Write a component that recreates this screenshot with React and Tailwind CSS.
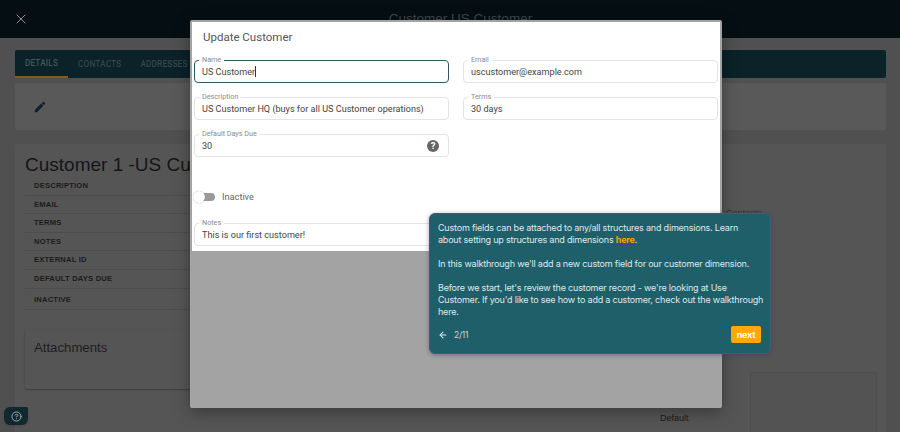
import React from "react";
import { X, ArrowLeft, CircleHelp } from "lucide-react";

const rows = ["DESCRIPTION", "EMAIL", "TERMS", "NOTES", "EXTERNAL ID", "DEFAULT DAYS DUE"];

const Field = ({ label, value, focused, icon }) => (
  <div className={"relative h-[23px] rounded-[4px] border bg-white flex items-center pl-[7px] pr-[8px] " + (focused ? "border-[#35575f] border-[1.5px]" : "border-[#e3e3e3]")}>
    <span className="absolute left-[4px] top-[-6px] bg-white px-[3px] text-[7.2px] leading-[9px] text-[#8a8a8a]">{label}</span>
    <span className="text-[9.1px] leading-[14px] text-[#444] whitespace-nowrap">{value}</span>
    {focused && <span className="w-px h-[11px] bg-[#333]"></span>}
    {icon && (
      <span className="ml-auto mr-[1px] w-[12px] h-[12px] rounded-full bg-[#666] text-white text-[9.5px] leading-[12px] font-bold text-center">?</span>
    )}
  </div>
);

export default function App() {
  return (
    <div className="relative w-[900px] h-[432px] overflow-hidden bg-[#505050] font-['Liberation_Sans',sans-serif]">
      <div className="h-[38px] bg-[#050f13] flex items-center justify-center relative">
        <X className="absolute left-[13px] top-[11px] text-[#8b9496]" size={16} strokeWidth={1.5} />
        <span className="text-[13.5px] text-[#3e474a] ml-[21px]">Customer US Customer</span>
      </div>

      <div className="pl-[15px] pr-[14px] pt-[12px]">
        <div className="h-[28px] rounded-[2px] bg-[#0a2228] flex font-['Roboto',sans-serif] font-medium text-[8.2px] tracking-[0.2px]">
          <div className="w-[53px] flex items-center justify-center text-[#41585c] border-b-2 border-[#8a5d0c]">DETAILS</div>
          <div className="ml-[10px] flex items-center text-[#33474c]">CONTACTS</div>
          <div className="ml-[19px] flex items-center text-[#33474c]">ADDRESSES</div>
        </div>

        <div className="mt-[5px] h-[47px] rounded-[2px] bg-[#595959] flex items-center pl-[18px]">
          <svg width="14" height="14" viewBox="0 0 24 24" fill="#0d2229">
            <path d="M3 17.25V21h3.75L17.81 9.94l-3.75-3.75L3 17.25zM20.71 7.04c.39-.39.39-1.02 0-1.41l-2.34-2.34c-.39-.39-1.02-.39-1.41 0l-1.83 1.83 3.75 3.75 1.83-1.83z" />
          </svg>
        </div>

        <div className="mt-[14px] rounded-[2px] bg-[#555555] h-[300px] pl-[10px] pt-[9px] flex">
          <div className="w-[250px]">
            <div className="text-[19px] leading-[24px] text-[#151515] whitespace-nowrap">Customer 1 -US Customer</div>
            <div>
              {rows.map((r) => (
                <div key={r} className="h-[18.6px] border-b border-[#4c4c4c] pl-[9px] flex items-center text-[7.6px] font-bold tracking-[0.2px] text-[#1c1c1c]">{r}</div>
              ))}
              <div className="h-[21px] pt-[3px] border-b border-[#4c4c4c] pl-[9px] flex items-center text-[7.6px] font-bold tracking-[0.2px] text-[#1c1c1c]">INACTIVE</div>
            </div>
            <div className="mt-[19px] h-[60px] w-[400px] rounded-[2px] bg-[#555555] shadow-[0_1px_2px_rgba(0,0,0,0.3)] pl-[9px] pt-[9px] text-[13.2px] text-[#1e1e1e]">Attachments</div>
          </div>
          <div className="ml-[475px] mt-[219px] w-[127px] h-[80px] border border-[#4e4e4e] bg-[#535353]"></div>
        </div>
      </div>
      <div className="absolute left-[726px] top-[207px] text-[9px] text-[#333]">Contacts</div>
      <div className="absolute left-[660px] top-[412px] text-[9px] text-[#1c1c1c]">Default</div>

      <button className="absolute left-[4px] top-[407px] w-[24px] h-[18px] rounded-[6px] rounded-tr-[2px] bg-[#10292e] flex items-center justify-center shadow">
        <CircleHelp className="text-[#a9b4b6]" size={11} />
      </button>

      {/* modal */}
      <div className="absolute left-[190px] top-[20px] w-[532px] h-[388px] bg-[#a3a3a3] rounded-[2px] shadow-[0_4px_16px_rgba(0,0,0,0.35)] p-[2px] pb-0 font-['Roboto',sans-serif]">
        <div className="h-[229px] bg-white">
          <div className="pl-[11px] pt-[7px] text-[11.5px] leading-[16px] text-[#555]">Update Customer</div>
          <div className="mt-[15px] pl-[2px] pr-[2px] grid grid-cols-2 gap-x-[14px] gap-y-[14px]">
            <Field label="Name" value="US Customer" focused />
            <Field label="Email" value="uscustomer@example.com" />
            <Field label="Description" value="US Customer HQ (buys for all US Customer operations)" />
            <Field label="Terms" value="30 days" />
            <Field label="Default Days Due" value="30" icon />
          </div>
          <div className="mt-[34px] pl-[1px] flex items-center h-[12px]">
            <div className="relative w-[20px] h-[8px] ml-[2px] rounded-full bg-[#9a9a9a]">
              <div className="absolute left-[-2px] top-[-2px] w-[12px] h-[12px] rounded-full bg-white shadow-[0_0_1px_rgba(0,0,0,0.4)]"></div>
            </div>
            <span className="ml-[7px] text-[9.2px] text-[#666]">Inactive</span>
          </div>
          <div className="mt-[20px] px-[2px]">
            <Field label="Notes" value="This is our first customer!" />
          </div>
        </div>
      </div>

      {/* walkthrough tooltip */}
      <div className="absolute left-[429px] top-[213px] w-[342px] h-[141px] rounded-[6px] bg-[#1f5f69] border border-[#4a5a6e] shadow-[0_1px_4px_rgba(60,50,110,0.5)] pl-[8px] pr-[9px] pt-[8px] font-['Inter',sans-serif] text-[9px] leading-[12px] tracking-[-0.2px] text-[#dfe9ea] whitespace-nowrap">
        <p>Custom fields can be attached to any/all structures and dimensions. Learn<br />about setting up structures and dimensions <a className="text-[#f5a800] font-bold underline decoration-[#4a3c9a]">here</a>.</p>
        <p className="mt-[12px]">In this walkthrough we'll add a new custom field for our customer dimension.</p>
        <p className="mt-[12px]">Before we start, let's review the customer record - we're looking at Use<br />Customer. If you'd like to see how to add a customer, check out the walkthrough<br />here.</p>
        <div className="mt-[8px] flex items-center">
          <ArrowLeft size={10} strokeWidth={2.5} className="text-[#dfe9ea]" />
          <span className="ml-[6px] text-[8.5px] text-[#c9d8da]">2/11</span>
          <button className="ml-auto w-[30px] h-[17px] rounded-[2px] bg-[#ffa800] text-white font-bold text-[9px]">next</button>
        </div>
      </div>
    </div>
  );
}
